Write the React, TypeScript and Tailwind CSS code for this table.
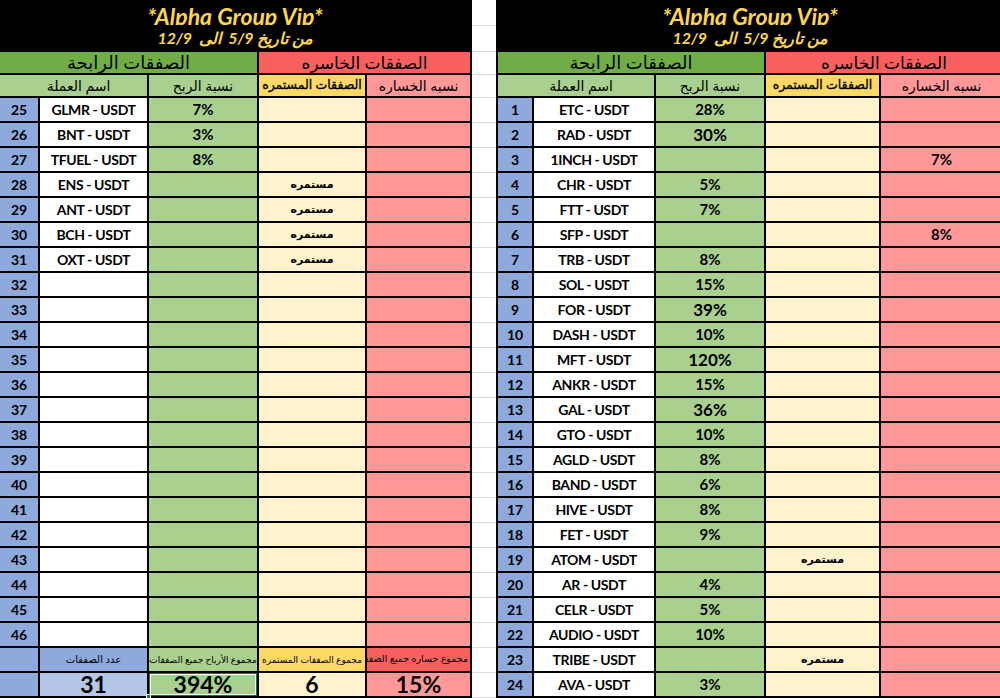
type Row = {
  n?: number
  name?: string
  win?: string
  big?: boolean
  open?: boolean
  loss?: string
}

const leftRows: Row[] = [
  { n: 25, name: "GLMR - USDT", win: "7%" },
  { n: 26, name: "BNT - USDT", win: "3%" },
  { n: 27, name: "TFUEL - USDT", win: "8%" },
  { n: 28, name: "ENS - USDT", open: true },
  { n: 29, name: "ANT - USDT", open: true },
  { n: 30, name: "BCH - USDT", open: true },
  { n: 31, name: "OXT - USDT", open: true },
  ...Array.from({ length: 15 }, (_, i) => ({ n: 32 + i })),
]

const rightRows: Row[] = [
  { n: 1, name: "ETC - USDT", win: "28%" },
  { n: 2, name: "RAD - USDT", win: "30%", big: true },
  { n: 3, name: "1INCH - USDT", loss: "7%" },
  { n: 4, name: "CHR - USDT", win: "5%" },
  { n: 5, name: "FTT - USDT", win: "7%" },
  { n: 6, name: "SFP - USDT", loss: "8%" },
  { n: 7, name: "TRB - USDT", win: "8%" },
  { n: 8, name: "SOL - USDT", win: "15%" },
  { n: 9, name: "FOR - USDT", win: "39%", big: true },
  { n: 10, name: "DASH - USDT", win: "10%" },
  { n: 11, name: "MFT - USDT", win: "120%", big: true },
  { n: 12, name: "ANKR - USDT", win: "15%" },
  { n: 13, name: "GAL - USDT", win: "36%", big: true },
  { n: 14, name: "GTO - USDT", win: "10%" },
  { n: 15, name: "AGLD - USDT", win: "8%" },
  { n: 16, name: "BAND - USDT", win: "6%" },
  { n: 17, name: "HIVE - USDT", win: "8%" },
  { n: 18, name: "FET - USDT", win: "9%" },
  { n: 19, name: "ATOM - USDT", open: true },
  { n: 20, name: "AR - USDT", win: "4%" },
  { n: 21, name: "CELR - USDT", win: "5%" },
  { n: 22, name: "AUDIO - USDT", win: "10%" },
  { n: 23, name: "TRIBE - USDT", open: true },
  { n: 24, name: "AVA - USDT", win: "3%" },
]

// every cell centres its content; the 2px black grid gap draws the borders
const c = "flex items-center justify-center overflow-hidden whitespace-nowrap"

function Title() {
  return (
    <div className="col-span-5 flex flex-col items-center bg-black font-bold italic text-[#ffd54f]">
      <div className="h-[25px] overflow-hidden">
        <div className="pt-[3px] text-[23px] leading-[26px]">*Alpha Group Vip*</div>
      </div>
      <div dir="rtl" className="pt-[3px] text-[16px] leading-[20px]">
        من تاريخ 5/9&nbsp;&nbsp;الى&nbsp;&nbsp;12/9
      </div>
    </div>
  )
}

function Headers() {
  return (
    <>
      <div className={`${c} col-span-3 bg-[#70ad47] text-[18px]`}>الصفقات الرابحة</div>
      <div className={`${c} col-span-2 bg-[#f8605f] text-[17px]`}>الصفقات الخاسره</div>
      <div className={`${c} col-span-2 bg-[#a9d08e] pl-[10px] text-[14px]`}>اسم العملة</div>
      <div className={`${c} bg-[#a9d08e] text-[14px]`}>نسبة الربح</div>
      <div className={`${c} bg-[#ffd966] text-[12.5px] [-webkit-text-stroke:0.35px_#000]`}>الصفقات المستمره</div>
      <div className={`${c} bg-[#ff9999] text-[14px]`}>نسبه الخساره</div>
    </>
  )
}

function DataRow({ r }: { r: Row }) {
  return (
    <>
      <div className={`${c} bg-[#8ea9db] text-[14px] font-bold`}>{r.n}</div>
      <div className={`${c} bg-white text-[14px] font-bold tracking-[-0.4px]`}>{r.name}</div>
      <div className={`${c} bg-[#a9d08e] font-bold ${r.big ? "text-[17px]" : "text-[15px]"}`}>{r.win}</div>
      <div className={`${c} bg-[#fff2cc] text-[11px] font-bold`}>{r.open ? "مستمره" : ""}</div>
      <div className={`${c} bg-[#ff9999] text-[15px] font-bold`}>{r.loss}</div>
    </>
  )
}

function Footer() {
  return (
    <>
      <div className="bg-[#8ea9db]" />
      <div className={`${c} bg-[#8ea9db] text-[10px]`}>عدد الصفقات</div>
      <div className={`${c} bg-[#a9d08e] text-[9px]`}>مجموع الأرباح جميع الصفقات</div>
      <div className={`${c} bg-[#ffd966] text-[9px]`}>مجموع الصفقات المستمره</div>
      <div className={`${c} justify-end bg-[#f8605f] pr-[2px] text-[9.5px]`}>مجموع خساره جميع الصفقات</div>

      <div className="bg-[#8ea9db]" />
      <div className={`${c} bg-[#b4c6e7] text-[23px] font-bold leading-none`}>31</div>
      <div className="relative flex items-center justify-center bg-[#a9d08e] text-[23px] font-bold leading-none shadow-[inset_0_0_0_1px_#217346,inset_0_0_0_2px_#ffffff]">
        394%
        <span className="absolute bottom-[-3px] left-[-3px] z-10 h-[5px] w-[5px] border border-white bg-[#217346]" />
      </div>
      <div className={`${c} bg-[#fff2cc] text-[23px] font-bold leading-none`}>6</div>
      <div className={`${c} bg-[#ff9999] text-[23px] font-bold leading-none`}>15%</div>
    </>
  )
}

function GapColumn() {
  const rows = [26, 26, 23, 23, ...Array(24).fill(25)]
  return (
    <div className="flex w-[24px] shrink-0 flex-col bg-white">
      {rows.map((h, i) => (
        <div key={i} className="shrink-0 border-b border-[#dadada]" style={{ height: h }} />
      ))}
    </div>
  )
}

export default function App() {
  return (
    <div className="flex h-[698px] w-[1000px] overflow-hidden bg-white font-['Lato','DejaVu_Sans',sans-serif] text-black">
      <div className="grid w-[472px] shrink-0 grid-cols-[38px_107px_108px_106px_103px] grid-rows-[50px_21px_21px_repeat(24,23px)] gap-[2px] bg-black pr-[2px] pb-[2px]">
        <Title />
        <Headers />
        {leftRows.map((r, i) => (
          <DataRow key={i} r={r} />
        ))}
        <Footer />
      </div>
      <GapColumn />
      <div className="grid w-[506px] shrink-0 grid-cols-[34px_120px_108px_113px_121px] grid-rows-[50px_21px_21px_repeat(24,23px)] gap-[2px] bg-black pl-[2px] pb-[2px]">
        <Title />
        <Headers />
        {rightRows.map((r, i) => (
          <DataRow key={i} r={r} />
        ))}
      </div>
    </div>
  )
}
